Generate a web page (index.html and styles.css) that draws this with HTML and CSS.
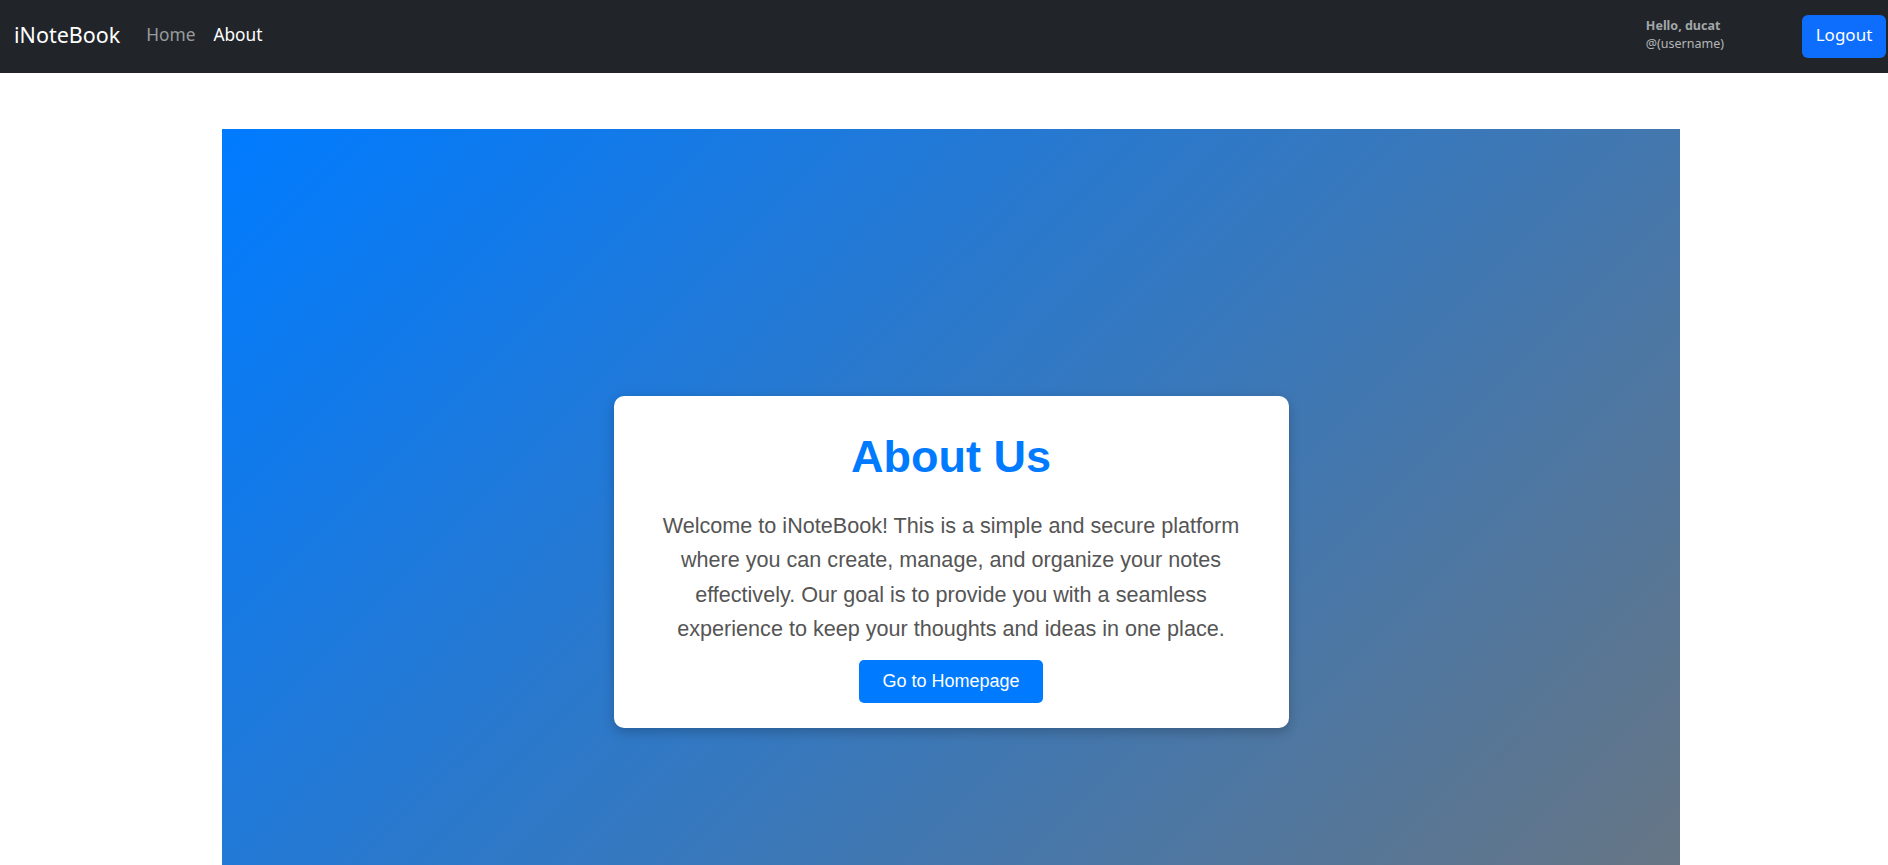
FILE: index.html
```html
<!DOCTYPE html>
<html lang="en">
<head>
<meta charset="utf-8">
<title>iNoteBook - About</title>
<link rel="stylesheet" href="styles.css">
</head>
<body>
<nav class="navbar">
  <a class="brand" href="#">iNoteBook</a>
  <ul class="nav-links">
    <li><a class="nav-link" href="#">Home</a></li>
    <li><a class="nav-link active" href="#">About</a></li>
  </ul>
  <div class="user">
    <div class="user-hello">Hello, ducat</div>
    <div class="user-name">@(username)</div>
  </div>
  <button class="btn-logout">Logout</button>
</nav>
<main class="hero">
  <div class="card">
    <h1 class="card-title">About Us</h1>
    <p class="card-text">Welcome to iNoteBook! This is a simple and secure platform where you can create, manage, and organize your notes effectively. Our goal is to provide you with a seamless experience to keep your thoughts and ideas in one place.</p>
    <a class="btn-home" href="#">Go to Homepage</a>
  </div>
</main>
</body>
</html>
```
FILE: styles.css
```css
html, body {
  margin: 0;
  padding: 0;
  background: #fff;
  overflow: hidden;
}
body {
  font-family: "Noto Sans", "Open Sans", sans-serif;
}
.navbar {
  height: 73px;
  background: #212529;
  display: flex;
  align-items: center;
  padding: 0 2px 0 14px;
  box-sizing: border-box;
}
.brand {
  color: #fff;
  text-decoration: none;
  font-size: 21.5px;
  margin-right: 17px;
  line-height: 1;
  padding-bottom: 4px;
}
.nav-links {
  list-style: none;
  display: flex;
  margin: 0;
  padding: 0 0 4px;
  flex: 1;
}
.nav-link {
  display: block;
  padding: 0 9px;
  font-size: 17.3px;
  color: rgba(255, 255, 255, 0.55);
  text-decoration: none;
}
.nav-link.active {
  color: #fff;
}
.user {
  display: flex;
  flex-direction: column;
  font-size: 12.5px;
  line-height: 18px;
  margin-right: 78px;
  padding-bottom: 4px;
}
.user-hello {
  font-weight: 700;
  color: #a3a6a9;
}
.user-name {
  color: #b4b6b8;
}
.btn-logout {
  background: #0d6efd;
  color: #fff;
  border: none;
  border-radius: 6px;
  height: 43px;
  width: 84px;
  font-family: inherit;
  font-size: 17px;
  padding: 0 0 3px;
  margin-bottom: 1px;
}
.hero {
  margin: 56px 208px 0 222px;
  height: 865px;
  background: linear-gradient(135deg, #007bff, #6c757d);
  display: flex;
  align-items: center;
  justify-content: center;
}
.card {
  width: 675px;
  box-sizing: border-box;
  background: #fff;
  border-radius: 10px;
  padding: 34px 34px 25px;
  box-shadow: 0 4px 12px rgba(0, 0, 0, 0.22);
  text-align: center;
  font-family: "Liberation Sans", Arial, sans-serif;
}
.card-title {
  margin: 0 0 25px;
  font-size: 45px;
  line-height: 54px;
  font-weight: 700;
  color: #007bff;
}
.card-text {
  margin: 0 0 13px;
  font-size: 21.6px;
  line-height: 34.5px;
  color: #555;
}
.btn-home {
  display: inline-block;
  background: #007bff;
  color: #fff;
  text-decoration: none;
  font-size: 18px;
  line-height: 21px;
  padding: 11px 23px;
  border-radius: 5px;
}
```
